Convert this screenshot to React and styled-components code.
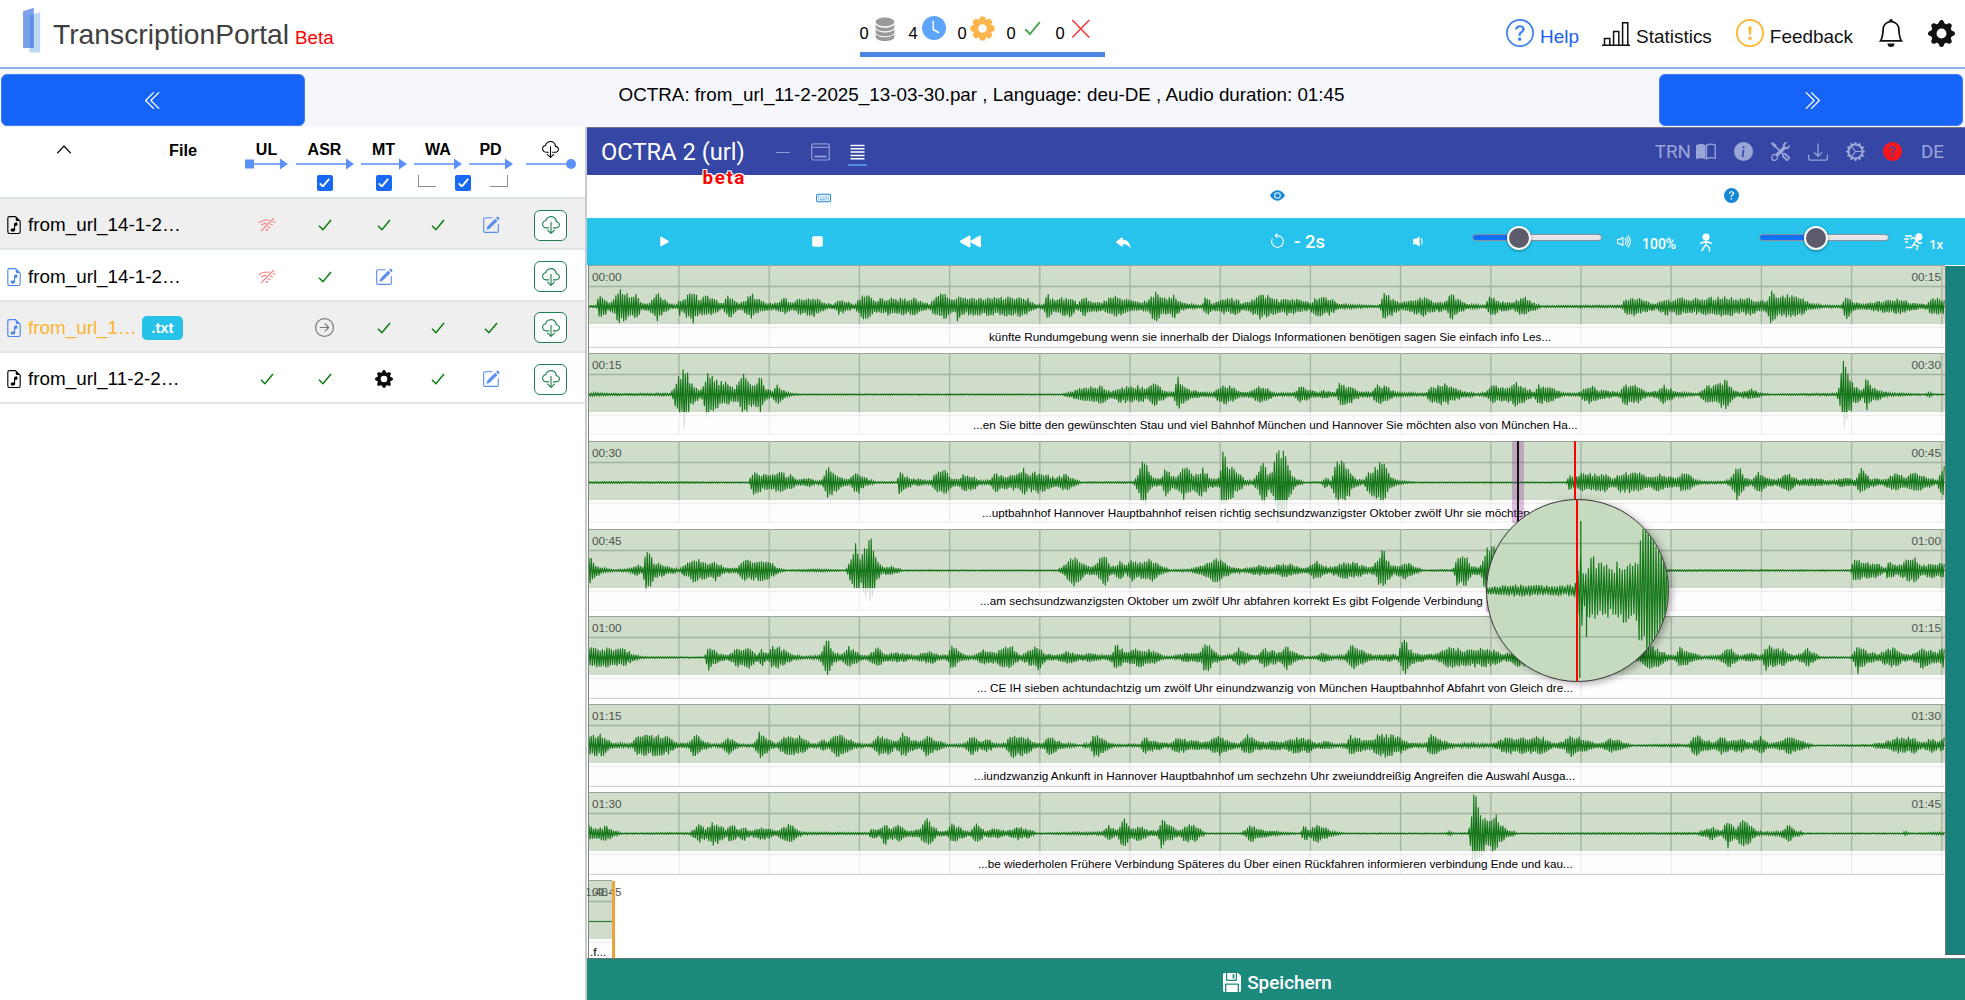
import React from "react";
import styled, { createGlobalStyle } from "styled-components";
import {
  BsChevronDoubleLeft, BsChevronDoubleRight, BsClockFill, BsGearFill,
  BsQuestionCircle, BsExclamationCircle, BsBell, BsFileEarmarkMusic, BsPencilSquare,
  BsWifiOff, BsArrowRightCircle, BsCloudDownload, BsInfoCircleFill, BsTools, BsDownload,
  BsGearWideConnected, BsQuestionCircleFill, BsKeyboard, BsEyeFill, BsPlayFill, BsStopFill,
  BsRewindFill, BsReplyFill, BsArrowCounterclockwise, BsVolumeDownFill, BsVolumeUp,
} from "react-icons/bs";

const Global = createGlobalStyle`
  * { box-sizing: border-box; }
  body { margin: 0; background: #fff; font-family: "Liberation Sans", Arial, sans-serif; color: #000; }
  svg { display: block; flex: none; }
`;

const Page = styled.div`
  width: 1965px;
  height: 1000px;
  overflow: hidden;
  display: flex;
  flex-direction: column;
`;

/* ---------- top header ---------- */
const Header = styled.header`
  height: 69px;
  border-bottom: 2px solid #8fb0ea;
  display: grid;
  grid-template-columns: 859.5px 246px 1fr;
`;
const Brand = styled.div`
  display: flex;
  align-items: baseline;
  padding: 17px 0 0 11px;
`;
const BrandRow = styled.div`
  display: flex;
  svg { margin: 6px 0 0 22px; }
`;
const BrandName = styled.span`
  font-size: 28.25px;
  line-height: 34px;
  color: #404040;
`;
const BrandTag = styled.span`
  font-size: 18.8px;
  color: #f00;
  margin-left: 6px;
`;
const Counters = styled.div`
  display: flex;
  flex-direction: column;
`;
const CounterList = styled.div`
  height: 52px;
  display: flex;
`;
const Counter = styled.div`
  width: 49px;
  display: flex;
  align-items: flex-start;
  span { font-size: 16.5px; line-height: 18px; margin-top: 24px; width: 10px; }
  svg { margin-top: ${(p) => p.$top}px; margin-left: ${(p) => p.$gap}px; }
`;
const CounterBar = styled.div`
  width: 245px;
  height: 5px;
  background: #4e84e2;
`;
const Links = styled.nav`
  display: flex;
  justify-content: flex-end;
  padding-right: 10px;
`;
const Link = styled.a`
  display: flex;
  font-size: 18.95px;
  color: ${(p) => p.$color || "#111"};
  margin-left: ${(p) => p.$before || 0}px;
  svg { color: ${(p) => p.$icon || "#111"}; margin-top: ${(p) => p.$top || 19}px; }
  span { line-height: 22px; margin: 26px 0 0 6px; }
`;

/* ---------- tool switch bar ---------- */
const ToolBar = styled.div`
  height: 58px;
  background: #f6f7fd;
  display: flex;
  justify-content: space-between;
  padding: 5px 2px 0 1px;
`;
const ToolButton = styled.button`
  width: 304px;
  height: 52px;
  border: 1px solid #3f7df8;
  border-radius: 6px;
  background: #1663f7;
  color: #fff;
  display: flex;
  align-items: center;
  justify-content: center;
`;
const ToolTitle = styled.div`
  font-size: 18.84px;
  line-height: 22px;
  margin-top: 10px;
  padding-right: 1px;
  white-space: pre;
`;

const Main = styled.main`
  flex: 1;
  min-height: 0;
  display: flex;
`;

/* ---------- file table ---------- */
const Sidebar = styled.section`
  width: 587px;
  border-right: 2px solid #c9cacc;
`;
const columns = "240px 53px 63px 55px 54px 51px 1fr";
const TableHead = styled.div`
  height: 72px;
  border-bottom: 2px solid #dbe1e6;
  padding-top: 14px;
`;
const HeadRow = styled.div`
  display: grid;
  grid-template-columns: ${columns};
  height: 30px;
`;
const HeadFile = styled.div`
  display: flex;
  font-size: 16.3px;
  font-weight: bold;
  line-height: 18px;
  svg { margin: 3px 97px 0 56px; }
`;
const HeadCell = styled.div`
  display: flex;
  flex-direction: column;
  align-items: center;
  font-size: 16px;
  font-weight: bold;
  line-height: 17px;
`;
const CheckRow = styled.div`
  display: grid;
  grid-template-columns: ${columns};
  height: 23px;
  justify-items: center;
  align-items: center;
`;
const LinkedCheck = styled.div`
  grid-column: 5 / 7;
  width: 100%;
  padding: 0 8px 0 7px;
  display: flex;
  justify-content: space-between;
  align-items: center;
`;
const Bracket = styled.i`
  width: 18px;
  height: 12px;
  margin-top: -3px;
  border: 0 solid #8d8d8d;
  border-bottom-width: 1.5px;
  ${(p) => (p.$right ? "border-right-width: 1.5px;" : "border-left-width: 1.5px;")}
`;
const Check = styled.span`
  width: 16px;
  height: 16px;
  border-radius: 2px;
  background: #1668f5;
  color: #fff;
  display: flex;
  align-items: center;
  justify-content: center;
`;
const FileRow = styled.div`
  height: 51.35px;
  padding-top: 3px;
  border-bottom: 2px solid #dfe4e8;
  background: ${(p) => (p.$shade ? "#efefef" : "#fff")};
  display: grid;
  grid-template-columns: ${columns};
  align-items: center;
  justify-items: center;
`;
const FileName = styled.div`
  justify-self: start;
  display: flex;
  align-items: center;
  padding-left: 5px;
  font-size: 18.85px;
  color: ${(p) => p.$color || "#000"};
  svg { color: ${(p) => p.$icon || "#000"}; margin-right: 5px; }
`;
const Badge = styled.span`
  margin-left: 5px;
  width: 41px;
  height: 24px;
  border-radius: 5px;
  background: #27c2ea;
  color: #fff;
  font-size: 14.8px;
  font-weight: bold;
  line-height: 24px;
  text-align: center;
`;
const DownloadButton = styled.button`
  width: 33px;
  height: 31px;
  padding: 0;
  border: 1px solid #1f8150;
  border-radius: 6px;
  background: #fff;
  color: #1f8150;
  display: flex;
  align-items: center;
  justify-content: center;
`;

/* ---------- OCTRA frame ---------- */
const Frame = styled.section`
  flex: 1;
  min-width: 0;
  display: flex;
  flex-direction: column;
  font-family: Roboto, "Liberation Sans", sans-serif;
`;
const OctraHeader = styled.div`
  height: 48px;
  border-top: 1px solid #72768f;
  background: #3646a5;
  display: flex;
  color: #9aa5d8;
  padding: 0 21px 0 14px;
`;
const OctraTitle = styled.div`
  width: 144px;
  color: #fff;
  font-size: 23.7px;
  line-height: 26px;
  padding-top: 11px;
  display: flex;
  flex-direction: column;
  white-space: nowrap;
`;
const OctraBeta = styled.span`
  align-self: flex-end;
  position: relative;
  color: #f00;
  font-size: 18.8px;
  font-weight: bold;
  letter-spacing: 1.6px;
  line-height: 20px;
  margin: 3px -1px 0 0;
  text-shadow: -1px -1px 0 #fff, 1px -1px 0 #fff, -1px 1px 0 #fff, 1px 1px 0 #fff;
`;
const ViewTab = styled.div`
  margin-left: ${(p) => p.$before}px;
  height: 38px;
  display: flex;
  align-items: center;
  justify-content: center;
  padding-top: 12px;
  color: ${(p) => (p.$active ? "#fff" : "#8f9ad2")};
  border-bottom: 2px solid ${(p) => (p.$active ? "#4e88e8" : "transparent")};
`;
const OctraMenu = styled.div`
  margin-left: auto;
  display: flex;
  align-items: center;
  font-size: 18.8px;
  > * + * { margin-left: 18px; }
  svg:first-of-type { margin-left: 5px; }
  span:last-child { margin-left: 19px; }
`;
const InfoBar = styled.div`
  height: 43px;
  display: grid;
  grid-template-columns: repeat(3, 454px);
  padding: 0 6px 2px 9px;
  align-items: center;
  justify-items: center;
  color: #1587d6;
  svg:first-child { margin-top: 3px; }
`;
const Player = styled.div`
  height: 47px;
  padding-left: 1px;
  background: #27c3ec;
  color: #fff;
  display: flex;
  align-items: center;
  font-weight: 500;
`;
const PlayerCell = styled.div`
  width: ${(p) => p.$w}px;
  display: flex;
  align-items: center;
  justify-content: center;
  gap: 8px;
  font-size: 18.5px;
`;
const PlayerText = styled.span`
  font-size: ${(p) => p.$size || 14}px;
  margin: 5px 0 0 ${(p) => p.$before}px;
`;
const Track = styled.div`
  width: 130px;
  height: 7px;
  margin: -8px 0 0 ${(p) => p.$before}px;
  border-radius: 4px;
  border: 1px solid #8e8e96;
  background: linear-gradient(90deg, #1070f4 ${(p) => p.$value}px, #e6e6ea ${(p) => p.$value}px);
  display: flex;
  align-items: center;
`;
const Knob = styled.i`
  flex: none;
  width: 24px;
  height: 24px;
  border-radius: 50%;
  border: 2.5px solid #fff;
  background: #5c5c6c;
  box-shadow: 0 1px 3px rgba(0, 0, 0, 0.4);
  margin-left: ${(p) => p.$at}px;
`;
const Spacer = styled.span`
  width: ${(p) => p.$w}px;
`;

/* ---------- signal view ---------- */
const Viewer = styled.div`
  position: relative;
  flex: 1;
  min-height: 0;
  overflow: hidden;
  display: flex;
  padding-left: 1px;
  border-bottom: 1px solid #66706c;
  font-family: "Liberation Sans", Arial, sans-serif;
`;
const Lines = styled.div`
  width: 1357px;
  border-left: 1px solid #7d857d;
`;
const Line = styled.div`
  position: relative;
  width: ${(p) => p.$w || 1356}px;
  height: 82.6px;
  margin-bottom: 5.25px;
  border-top: 1.4px solid #9aa399;
  border-bottom: ${(p) => (p.$w ? 0 : 2)}px solid #d4d4d6;
  background: linear-gradient(#d0ddca 58px, #fff 58px);
`;
const WaveLayer = styled.svg`
  position: absolute;
  left: 0;
  top: -1px;
`;
const Times = styled.div`
  position: relative;
  height: 58px;
  padding: 4px 3px 0 3px;
  font-size: 11.8px;
  line-height: 14px;
  color: #4d554d;
`;
const EndTime = styled.span`
  position: absolute;
  right: 4px;
  top: 4px;
`;
const SegmentText = styled.div`
  position: relative;
  height: 23px;
  background: rgba(255, 253, 255, 0.8);
  padding: 4px 0 0 ${(p) => p.$start}px;
  font-size: 11.72px;
  line-height: 18px;
  white-space: nowrap;
`;
const PlayCursor = styled.div`
  position: absolute;
  left: ${(p) => p.$x}px;
  top: ${(p) => p.$y}px;
  width: 12px;
  height: ${(p) => p.$h}px;
  background: linear-gradient(90deg, transparent 5px, ${(p) => (p.$bar ? "#151015" : "transparent")} 5px 7px, transparent 7px), rgba(150, 60, 160, 0.32);
`;
const MouseCursor = styled.div`
  position: absolute;
  left: 987px;
  top: 176px;
  width: 2px;
  height: 60px;
  background: #f00;
`;
const Magnifier = styled.div`
  position: absolute;
  left: 899px;
  top: 234px;
  width: 183px;
  height: 183px;
  border-radius: 50%;
  border: 1.5px solid #383838;
  background: #c6dac0;
  overflow: hidden;
  box-shadow: 3px 2px 7px rgba(0, 0, 0, 0.3);
`;
const EndMarker = styled.div`
  position: absolute;
  right: -3px;
  top: 0;
  width: 3px;
  height: 90px;
  background: #eda23c;
`;
const Rail = styled.div`
  width: 20px;
  height: 689px;
  margin-top: 1px;
  border-left: 1px solid #6b7a78;
  border-bottom: 1px solid #55605e;
  background: #1a817d;
`;
const SaveBar = styled.button`
  height: 41px;
  border: 0;
  background: #1b8a7d;
  color: #fff;
  display: flex;
  align-items: center;
  justify-content: center;
  gap: 6px;
  font: 500 18.9px Roboto, "Liberation Sans", sans-serif;
  padding: 5px 0 0 3px;
`;

/* ---------- drawings ---------- */
const Logo = () => (
  <svg width="20" height="48" viewBox="22 6 20 48">
    <path d="M29.5 15.4L40.2 12.2V52.4H29.5z" fill="#bcd7f1" />
    <path d="M23 11.2L33.8 7.8V48H23z" fill="#7ca1ec" />
    <path d="M29.5 15.4L33.8 14.2V48H29.5z" fill="#5f91e2" />
  </svg>
);
const Database = () => (
  <svg width="20" height="25" viewBox="0 0 20 25" fill="#999">
    <ellipse cx="10" cy="4.8" rx="9.4" ry="4.4" />
    {[7.2, 12, 16.8].map((y) => (
      <path key={y} d={`M.6 ${y}v2.9c0 5.7 18.8 5.7 18.8 0V${y}c-1.8 4.6-17 4.6-18.8 0z`} />
    ))}
  </svg>
);
const Bars = () => (
  <svg width="28" height="27" viewBox="0 0 28 27" fill="none" stroke="#111" strokeWidth="1.5">
    <path d="M0 25.2h28M2.5 25v-6.6h5.3V25M11.6 25V11.6h5.2V25M20.6 25V2.8h5.2V25" />
  </svg>
);
const Caret = () => (
  <svg width="16" height="11" viewBox="0 0 16 11" fill="none" stroke="#111" strokeWidth="1.3">
    <path d="M1.3 9.3L8 2l6.7 7.3" />
  </svg>
);
const Burst = () => (
  <svg width="25" height="25" viewBox="-12.5 -12.5 25 25" fill="#fcb44c">
    {[0, 45, 90, 135].map((a) => (
      <rect key={a} x="-2.9" y="-12" width="5.8" height="24" rx="1.5" transform={`rotate(${a})`} />
    ))}
    <circle r="9.8" />
    <circle r="4.3" fill="#fff" />
  </svg>
);
const Cross = () => (
  <svg width="20" height="20" viewBox="0 0 20 20" stroke="#f8383c" strokeWidth="1.6">
    <path d="M1.3 1l17 17.500M18.300 1l-17 17.500" />
  </svg>
);
const Flow = ({ w, kind }) => (
  <svg width={w} height="12" viewBox={`0 0 ${w} 12`} fill="#5b90f6">
    <path d={`M0 6H${w - 6}`} stroke="#83aaf7" strokeWidth="2" />
    {kind === "start" && <path d="M0 1.5h9v9H0z" />}
    {kind === "end" ? <circle cx={w - 5} cy="6" r="5" /> : <path d={`M${w - 8} .5L${w} 6l-8 5.5z`} />}
  </svg>
);
const Book = () => (
  <svg width="20" height="18" viewBox="0 0 20 18">
    <path d="M0 2.2C3 .6 7 .8 9.5 2.2v14.2C7 15 3 15 0 16.2z" fill="currentColor" />
    <path d="M10.5 2.2C13 1 16.500 .9 19.200 2v13.300c-3-.9-6.200-.7-8.700.6z" fill="none" stroke="currentColor" strokeWidth="1.3" />
  </svg>
);
const Panel = () => (
  <svg width="19" height="18" viewBox="0 0 19 18" fill="none" stroke="currentColor" strokeWidth="1.2">
    <rect x=".7" y=".8" width="17.600" height="16.200" rx="2" />
    <path d="M1 4.300h17" />
    <path d="M3.500 13.500h12" strokeWidth="2" />
  </svg>
);
const Rows = () => (
  <svg width="19" height="16" viewBox="0 0 19 16" stroke="currentColor" strokeWidth="1.500">
    <path d="M2.500 1.500h14M2.500 4.800h14M2.500 8.100h14M2.500 11.400h14M2.500 14.700h14" />
  </svg>
);
const Dash = () => (
  <svg width="14" height="3" viewBox="0 0 14 3">
    <path d="M0 1.500h14" stroke="currentColor" />
  </svg>
);
const Walker = () => (
  <svg width="14" height="20" viewBox="0 0 14 20" stroke="#fff" strokeWidth="1.400" fill="none">
    <circle cx="7" cy="5" r="2.900" fill="#fff" />
    <path d="M7 8v5M1 11.500l6-2.200 6 2.200M7 12.500L2.500 19M7 12.500l3.500 3.500v3.500" />
  </svg>
);
const Runner = () => (
  <svg width="19" height="18" viewBox="0 0 19 18" stroke="#fff" strokeWidth="1.400" fill="none">
    <circle cx="14.800" cy="3.800" r="2.900" fill="#fff" />
    <path d="M1 3h7M0 6h5M1 9h3M6.500 6l3-1.500 3 2.500-3 4.500 4.500 1.500-1.500 4M12.500 7l2 3H18M9.500 11l-2 3.500H1.500" />
  </svg>
);
const Floppy = () => (
  <svg width="18" height="19" viewBox="0 0 18 19" fill="#fff">
    <path d="M1.500 0H3v6.500C3 7.300 3.600 8 4.500 8h8c.8 0 1.500-.7 1.500-1.500V0h1l3 2.800v14.700c0 .8-.7 1.500-1.500 1.500H16v-7.300c0-.8-.6-1.200-1.300-1.200H3.300c-.7 0-1.300.5-1.300 1.200V19h-.5C.7 19 0 18.300 0 17.500v-16C0 .7.700 0 1.500 0z" />
    <path d="M4.200 0h8.600v6c0 .5-.3.800-.8.800H5c-.5 0-.8-.3-.8-.8zM9.600 1.300v4.200h1.800V1.300zM3.300 19v-6.800c0-.3.200-.5.500-.5h10.400c.300 0 .5.200.5.500V19z" fillRule="evenodd" />
  </svg>
);

/* ---------- waveform data: [position, amplitude, position, amplitude, ...] ---------- */
const LEFT = { from: -8.5, rate: 2.376 };
const RIGHT = { from: 651.5, rate: 2.163 };
const envelopes = [
  [
    [20,2,38,2,45,40,55,30,65,12,80,20,90,48,100,42,120,28,133,34,145,12,160,10,183,38,200,20,215,8,230,4,235,25,240,12,250,25,265,50,280,22,298,34,310,22,325,16,338,8,345,30,360,28,375,8,388,16,405,36,425,20,440,10,465,10,485,24,500,10,515,20,555,28,575,12,600,6,615,22,630,16,650,6,665,28,675,36,700,18,715,22,740,24,765,22,790,24,810,14,830,8,840,22,860,38,880,22,890,18,897,42,915,22,950,25,1000,24,1050,28,1070,18,1085,4,1100,8,1108,35,1125,20,1165,28,1180,8,1195,30,1215,16,1240,12,1265,32,1285,24,1310,16,1330,10,1350,20,1365,42,1385,22,1410,32,1430,10,1475,2,1485,28,1500,10,1530,20,1568,24],
    [0,10,25,20,42,38,65,26,85,18,105,24,150,12,170,28,195,22,215,6,300,2,312,42,325,26,345,10,375,20,395,26,420,14,445,14,455,38,470,20,490,8,530,3,540,32,560,14,590,10,610,30,630,14,650,2,825,3,832,22,850,28,880,14,900,8,920,26,935,14,942,30,965,20,1000,24,1060,28,1080,20,1100,26,1120,14,1140,18,1146,46,1165,28,1185,34,1200,26,1215,24,1230,10,1260,3,1300,3,1310,36,1325,14,1345,6,1375,14,1395,16,1425,24,1450,10,1485,6,1495,26,1523,20],
  ],
  [
    [20,4,60,3,100,2,215,3,225,30,240,60,246,92,252,75,260,35,275,18,290,14,300,58,320,48,330,36,345,32,365,18,375,30,386,56,400,40,415,34,428,46,440,20,455,10,468,26,485,10,500,3,520,1,1145,1,1165,8,1190,18,1240,24,1260,8,1275,20,1325,24,1345,16,1360,32,1375,24,1395,6,1410,8,1420,55,1430,25,1450,12,1500,4,1525,30,1550,20,1568,8],
    [0,6,25,10,35,26,55,18,75,4,115,4,130,24,150,12,170,5,178,12,190,8,205,4,215,32,240,22,260,8,285,8,295,26,315,24,335,6,400,3,410,20,443,30,470,14,510,2,530,6,545,24,575,18,597,34,615,20,635,8,645,26,675,20,700,3,730,4,755,28,775,12,800,10,820,4,828,30,860,24,880,6,900,10,915,28,940,8,990,2,1005,22,1030,28,1052,42,1065,14,1080,6,1105,16,1125,4,1145,1,1290,3,1297,40,1306,105,1314,70,1325,30,1345,12,1354,50,1365,18,1385,14,1400,4,1480,1,1490,6,1500,1,1523,1],
  ],
  [
    [20,2,400,1,412,40,430,22,455,20,478,34,490,16,502,24,515,8,545,12,560,4,575,10,588,42,605,26,625,12,640,10,655,34,675,14,700,2,752,2,758,34,775,16,795,8,805,12,820,4,835,8,845,32,862,38,880,16,895,10,910,22,935,20,950,5,975,8,985,26,1010,18,1040,22,1050,42,1065,24,1090,30,1105,24,1130,12,1152,26,1170,12,1190,1,1315,2,1325,30,1340,78,1350,30,1365,12,1380,10,1390,46,1402,20,1420,18,1435,48,1455,24,1480,40,1495,14,1518,12,1526,80,1540,50,1560,30,1568,20],
    [0,24,10,6,25,4,40,30,50,62,62,20,70,40,80,108,95,95,105,40,120,10,140,1,175,2,183,16,195,6,208,68,230,50,245,15,265,6,275,25,307,60,320,25,345,4,380,1,705,1,712,22,722,12,735,24,790,26,805,10,820,26,860,28,885,18,910,24,940,12,962,30,985,8,1000,3,1050,3,1065,20,1077,56,1090,16,1105,8,1120,30,1140,14,1160,8,1185,26,1205,8,1245,12,1280,4,1305,14,1330,8,1342,38,1360,14,1390,8,1415,24,1440,16,1460,30,1485,18,1505,6,1512,20,1520,45,1523,45],
  ],
  [
    [20,40,35,18,55,6,80,2,115,4,135,16,148,10,155,54,165,50,175,24,200,14,235,3,250,20,270,34,300,20,322,28,340,8,370,6,390,28,420,30,455,20,475,4,490,1,565,3,630,1,642,30,650,70,658,72,665,28,675,70,690,105,700,40,715,10,740,12,765,1,1135,1,1160,30,1175,44,1190,24,1205,12,1225,16,1243,48,1260,14,1270,10,1282,32,1295,12,1310,32,1330,22,1358,34,1375,14,1400,2,1450,3,1480,16,1500,34,1525,28,1545,10,1568,6],
    [0,3,40,14,65,10,95,22,125,12,140,6,165,26,190,8,215,20,245,24,270,10,288,12,308,58,320,24,335,12,355,24,375,14,395,1,460,2,470,48,487,45,500,14,518,10,530,60,545,85,560,50,600,20,700,2,1320,1,1328,40,1345,20,1375,22,1395,5,1400,25,1420,14,1455,38,1475,14,1500,22,1523,20],
  ],
  [
    [20,28,65,26,105,24,125,10,145,2,295,1,305,36,325,14,350,6,375,28,405,28,420,8,432,24,445,8,455,32,480,26,500,10,530,3,565,5,575,20,585,56,600,16,620,8,638,30,660,12,680,6,705,30,725,10,755,14,790,6,835,18,855,6,872,8,880,40,900,14,925,4,940,8,960,24,985,14,1000,26,1025,30,1045,8,1060,16,1087,36,1105,10,1130,8,1155,18,1185,8,1210,12,1240,6,1260,10,1275,38,1295,14,1320,26,1360,20,1385,4,1405,3,1440,12,1465,14,1475,20,1487,48,1500,22,1520,8,1545,6,1560,20,1568,34],
    [0,26,20,8,35,6,50,26,85,14,98,34,115,16,140,2,165,4,178,16,200,4,225,6,240,34,265,18,290,6,325,12,340,6,352,54,370,20,400,8,425,10,455,32,480,22,505,26,545,24,570,8,600,24,640,20,860,10,880,34,905,24,925,8,940,6,950,28,985,10,1000,3,1035,5,1058,30,1080,4,1105,14,1125,4,1137,34,1175,22,1200,4,1225,26,1255,2,1320,1,1335,42,1355,16,1380,10,1410,32,1430,14,1450,6,1475,30,1505,14,1523,30],
  ],
  [
    [20,26,50,30,75,8,110,4,125,8,132,30,165,28,205,26,230,8,255,6,270,34,295,12,315,3,335,6,352,24,375,4,410,3,425,38,450,16,465,4,480,24,520,28,545,8,565,6,575,18,590,10,605,34,630,24,660,6,690,3,705,26,735,24,748,10,765,34,785,18,805,10,820,28,850,14,870,3,910,4,930,26,950,10,962,18,975,14,990,4,1010,6,1022,34,1055,26,1080,8,1095,6,1115,26,1145,8,1190,1,1198,6,1208,4,1225,40,1245,16,1270,3,1330,3,1340,22,1375,12,1400,4,1415,24,1450,14,1490,10,1515,28,1545,12,1568,4],
    [0,10,15,30,35,14,60,10,75,14,95,10,110,22,150,20,165,6,180,14,205,4,230,6,237,30,270,14,285,14,300,34,345,24,365,8,400,4,410,30,440,14,465,3,490,6,545,4,570,22,610,22,655,24,675,6,700,12,712,32,740,20,770,6,785,8,800,24,835,6,850,1,915,3,970,3,982,30,1015,12,1025,10,1040,24,1060,14,1080,20,1105,8,1125,26,1145,5,1160,10,1190,24,1230,6,1240,1,1365,2,1375,6,1395,10,1420,22,1455,22,1475,8,1495,20,1510,10,1523,22],
  ],
  [
    [20,24,40,12,60,24,80,8,100,1,260,2,280,26,300,14,310,30,325,32,345,10,360,28,375,12,387,22,405,6,420,18,445,16,465,6,490,24,505,26,525,3,685,2,692,16,710,8,722,32,740,16,755,24,775,8,805,12,823,40,850,8,870,6,882,26,905,14,925,6,942,28,960,8,990,16,1010,6,1040,18,1065,12,1085,1,1240,4,1257,24,1275,8,1290,42,1308,14,1330,24,1350,8,1370,8,1380,38,1400,22,1420,8,1445,28,1465,20,1485,1,1568,1],
    [0,1,10,8,22,26,40,12,90,3,130,1,138,22,150,10,165,26,180,18,200,5,225,1,445,1,450,6,460,1,493,2,505,115,515,75,530,42,540,36,550,60,560,30,575,12,600,1,990,2,1000,10,1022,18,1040,6,1055,40,1070,12,1088,42,1100,28,1115,8,1130,3,1150,5,1165,5,1185,24,1200,10,1220,1,1430,1,1438,5,1450,1,1523,3],
  ],
];

function toPoints(row) {
  const pts = [];
  [LEFT, RIGHT].forEach((seg, s) => {
    const data = row[s];
    for (let i = 0; i < data.length; i += 2) {
      pts.push([seg.from + data[i] / seg.rate, data[i + 1] / 3]);
    }
  });
  return pts;
}

function wavePath(points, width, mid, seed, step = 1.12) {
  let r = seed * 9301 + 77;
  const rand = () => {
    r = (r * 16807 + 11) % 2147483647;
    return r / 2147483647;
  };
  let k = 0;
  let sign = -1;
  let d = `M0 ${mid}`;
  for (let x = 0; x < width; x += step) {
    while (k < points.length - 2 && points[k + 1][0] < x) k += 1;
    const [x0, a0] = points[k];
    const [x1, a1] = points[k + 1];
    const t = Math.min(1, Math.max(0, (x - x0) / (x1 - x0 || 1)));
    const amp = a0 + (a1 - a0) * t;
    const y = mid + sign * (amp * (0.72 + 0.45 * rand()) + 0.2);
    d += `L${x.toFixed(1)} ${y.toFixed(1)}`;
    sign = -sign;
  }
  return d;
}

function Wave({ width = 1356, points, seed }) {
  const verticals = [];
  for (let x = 90; x < width; x += 90.2) verticals.push(x);
  return (
    <WaveLayer width={width} height="82" viewBox={`0 0 ${width} 82`}>
      <path
        d={verticals.map((x) => `M${x.toFixed(1)} 0V82`).join("") + `M0 21.500H${width}M0 62.500H${width}`}
        stroke="#a3b4a1"
        strokeWidth="1.300"
        fill="none"
      />
      <path d={`M0 41.500H${width}`} stroke="#2a7f2e" strokeWidth="1.200" />
      {points && <path d={wavePath(points, width, 41.5, seed)} stroke="#127516" strokeWidth="1.08" fill="none" />}
    </WaveLayer>
  );
}

const lensPoints = [
  [0, 3.5], [20, 5], [40, 5], [60, 4.5], [87, 5], [90, 14], [94, 40], [96, 22], [98, 20], [104, 34], [112, 27],
  [118, 27], [125, 22], [135, 28], [145, 27], [151, 36], [154, 58], [160, 66], [167, 62], [173, 48], [183, 42],
];

const segments = [
  ["00:00", "00:15", 400, "künfte Rundumgebung wenn sie innerhalb der Dialogs Informationen benötigen sagen Sie einfach info Les..."],
  ["00:15", "00:30", 384, "...en Sie bitte den gewünschten Stau und viel Bahnhof München und Hannover Sie möchten also von München Ha..."],
  ["00:30", "00:45", 393, "...uptbahnhof Hannover Hauptbahnhof reisen richtig sechsundzwanzigster Oktober zwölf Uhr sie möchten"],
  ["00:45", "01:00", 391, "...am sechsundzwanzigsten Oktober um zwölf Uhr abfahren korrekt Es gibt Folgende Verbindung G"],
  ["01:00", "01:15", 388, "... CE IH sieben achtundachtzig um zwölf Uhr einundzwanzig von München Hauptbahnhof Abfahrt von Gleich dre..."],
  ["01:15", "01:30", 385, "...iundzwanzig Ankunft in Hannover Hauptbahnhof um sechzehn Uhr zweiunddreißig Angreifen die Auswahl Ausga..."],
  ["01:30", "01:45", 389, "...be wiederholen Frühere Verbindung Späteres du Über einen Rückfahren informieren verbindung Ende und kau..."],
];

const BLUE = "#4b86ee";
const files = [
  { name: "from_url_14-1-2…", shade: true, cells: ["off", "ok", "ok", "ok", "edit"] },
  { name: "from_url_14-1-2…", icon: BLUE, cells: ["off", "ok", "edit", "", ""] },
  { name: "from_url_1…", icon: BLUE, color: "#fdb32b", tag: ".txt", shade: true, cells: ["", "skip", "ok", "ok", "ok"] },
  { name: "from_url_11-2-2…", cells: ["ok", "ok", "busy", "ok", "edit"] },
];

const Tick = ({ w = 14, color = "#0b7d10", weight = 1.5 }) => (
  <svg width={w} height={w * 0.86} viewBox="0 0 14 12" fill="none" stroke={color} strokeWidth={weight}>
    <path d="M1 6.800L4.900 10.700 13 1" />
  </svg>
);

const Status = ({ kind }) => {
  if (kind === "ok") return <Tick />;
  if (kind === "off") return <BsWifiOff size={18} color="#fa7f7f" />;
  if (kind === "edit") return <BsPencilSquare size={18} color="#5b8eee" />;
  if (kind === "skip") return <BsArrowRightCircle size={19} color="#777" />;
  if (kind === "busy") return <BsGearFill size={18} color="#0c0c0c" />;
  return <span />;
};

const headers = [
  ["UL", 43, "start"],
  ["ASR", 58],
  ["MT", 46],
  ["WA", 48],
  ["PD", 44],
];

const CheckBox = () => (
  <Check>
    <Tick w={11} color="#fff" weight={2.4} />
  </Check>
);

export default function App() {
  return (
    <Page>
      <Global />
      <Header>
        <BrandRow>
          <Logo />
          <Brand>
            <BrandName>TranscriptionPortal</BrandName>
            <BrandTag>Beta</BrandTag>
          </Brand>
        </BrandRow>
        <Counters>
          <CounterList>
            <Counter $top={17} $gap={5}><span>0</span><Database /></Counter>
            <Counter $top={16} $gap={3}><span>4</span><BsClockFill size={24} color="#5ca5fa" /></Counter>
            <Counter $top={16} $gap={2}><span>0</span><Burst /></Counter>
            <Counter $top={21} $gap={7}><span>0</span><Tick w={17} color="#4ea356" weight={1.6} /></Counter>
            <Counter $top={19} $gap={5}><span>0</span><Cross /></Counter>
          </CounterList>
          <CounterBar />
        </Counters>
        <Links>
          <Link $color="#1a62f0" $icon="#4382ea"><BsQuestionCircle size={28} /><span>Help</span></Link>
          <Link $before={23} $top={20}><Bars /><span>Statistics</span></Link>
          <Link $before={24} $icon="#fdb32b"><BsExclamationCircle size={28} /><span>Feedback</span></Link>
          <Link $before={24}><BsBell size={28} /></Link>
          <Link $before={23} $top={20}><BsGearFill size={27} /></Link>
        </Links>
      </Header>
      <ToolBar>
        <ToolButton><BsChevronDoubleLeft size={21} /></ToolButton>
        <ToolTitle>OCTRA: from_url_11-2-2025_13-03-30.par , Language: deu-DE , Audio duration: 01:45</ToolTitle>
        <ToolButton><BsChevronDoubleRight size={21} /></ToolButton>
      </ToolBar>
      <Main>
        <Sidebar>
          <TableHead>
            <HeadRow>
              <HeadFile><Caret />File</HeadFile>
              {headers.map(([label, w, kind]) => (
                <HeadCell key={label}>{label}<Flow w={w} kind={kind} /></HeadCell>
              ))}
              <HeadCell><BsCloudDownload size={17} /><Flow w={50} kind="end" /></HeadCell>
            </HeadRow>
            <CheckRow>
              <span /><span /><CheckBox /><CheckBox />
              <LinkedCheck><Bracket /><CheckBox /><Bracket $right /></LinkedCheck>
            </CheckRow>
          </TableHead>
          {files.map((f, i) => (
            <FileRow key={i} $shade={f.shade}>
              <FileName $icon={f.icon} $color={f.color}>
                <BsFileEarmarkMusic size={18} />
                {f.name}
                {f.tag && <Badge>{f.tag}</Badge>}
              </FileName>
              {f.cells.map((c, j) => <Status key={j} kind={c} />)}
              <DownloadButton><BsCloudDownload size={18} /></DownloadButton>
            </FileRow>
          ))}
        </Sidebar>
        <Frame>
          <OctraHeader>
            <OctraTitle>OCTRA 2 (url)<OctraBeta>beta</OctraBeta></OctraTitle>
            <ViewTab $before={31}><Dash /></ViewTab>
            <ViewTab $before={21}><Panel /></ViewTab>
            <ViewTab $before={18} $active><Rows /></ViewTab>
            <OctraMenu>
              <span>TRN</span><Book />
              <BsInfoCircleFill size={19} />
              <BsTools size={19} />
              <BsDownload size={20} />
              <BsGearWideConnected size={19} />
              <BsQuestionCircleFill size={19} color="#fb161b" />
              <span>DE</span>
            </OctraMenu>
          </OctraHeader>
          <InfoBar>
            <BsKeyboard size={15} />
            <BsEyeFill size={15} />
            <BsQuestionCircleFill size={15} />
          </InfoBar>
          <Player>
            <PlayerCell $w={153}><BsPlayFill size={17} /></PlayerCell>
            <PlayerCell $w={153}><BsStopFill size={19} /></PlayerCell>
            <PlayerCell $w={153}><BsRewindFill size={21} /></PlayerCell>
            <PlayerCell $w={153}><BsReplyFill size={18} /></PlayerCell>
            <PlayerCell $w={194}><BsArrowCounterclockwise size={17} />- 2s</PlayerCell>
            <PlayerCell $w={48}><BsVolumeDownFill size={17} /></PlayerCell>
            <Track $before={30} $value={46}><Knob $at={34} /></Track>
            <Spacer $w={14} />
            <BsVolumeUp size={17} />
            <PlayerText $before={9}>100%</PlayerText>
            <Spacer $w={23} />
            <Walker />
            <Track $before={46} $value={46}><Knob $at={44} /></Track>
            <Spacer $w={15} />
            <Runner />
            <PlayerText $before={6} $size={13}>1x</PlayerText>
          </Player>
          <Viewer>
            <Lines>
              {segments.map(([start, end, x, text], i) => (
                <Line key={start}>
                  <Wave points={toPoints(envelopes[i])} seed={i + 3} />
                  <Times>{start}<EndTime>{end}</EndTime></Times>
                  <SegmentText $start={x}>{text}</SegmentText>
                </Line>
              ))}
              <Line $w={23}>
                <Wave width={23} />
                <Times>01:45<EndTime>01:46</EndTime></Times>
                <SegmentText $start={1}>.f...</SegmentText>
                <EndMarker />
              </Line>
            </Lines>
            <Rail />
            <PlayCursor $x={925} $y={176} $h={82} $bar />
            <PlayCursor $x={899} $y={305} $h={42} />
            <MouseCursor />
            <Magnifier>
              <svg width="181" height="181" viewBox="0 0 181 181" fill="none">
                <path d="M0 43.500H181M0 137H181" stroke="#9db29b" strokeWidth="1.300" />
                <path d={wavePath(lensPoints, 181, 90.5, 5, 1.3)} stroke="#157818" strokeWidth="1.150" />
                <path d="M92.800 90V178M93.800 90V21M99.500 90V137" stroke="#157818" strokeWidth="1.300" />
                <path d="M90 0V181" stroke="#f00" strokeWidth="2" />
              </svg>
            </Magnifier>
          </Viewer>
          <SaveBar><Floppy />Speichern</SaveBar>
        </Frame>
      </Main>
    </Page>
  );
}
